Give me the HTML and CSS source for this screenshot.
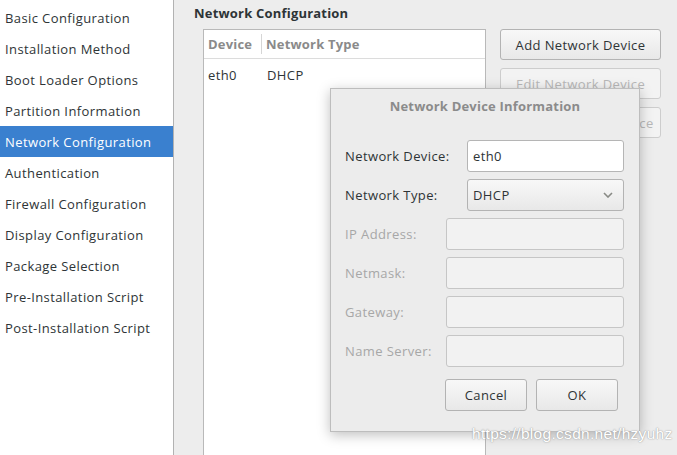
FILE: index.html
```html
<!DOCTYPE html>
<html>
<head>
<meta charset="utf-8">
<link rel="stylesheet" href="styles.css">
</head>
<body>
<div class="app">
  <nav class="sidebar">
    <div class="item">Basic Configuration</div>
    <div class="item">Installation Method</div>
    <div class="item">Boot Loader Options</div>
    <div class="item">Partition Information</div>
    <div class="item selected">Network Configuration</div>
    <div class="item">Authentication</div>
    <div class="item">Firewall Configuration</div>
    <div class="item">Display Configuration</div>
    <div class="item">Package Selection</div>
    <div class="item">Pre-Installation Script</div>
    <div class="item">Post-Installation Script</div>
  </nav>
  <main class="content">
    <h1 class="title">Network Configuration</h1>
    <div class="panel">
      <div class="table">
        <div class="thead">
          <div class="th col-device">Device</div>
          <div class="th col-type">Network Type</div>
        </div>
        <div class="tr">
          <div class="td col-device">eth0</div>
          <div class="td col-type">DHCP</div>
        </div>
      </div>
      <div class="actions">
        <button class="btn">Add Network Device</button>
        <button class="btn disabled">Edit Network Device</button>
        <button class="btn disabled">Delete Network Device</button>
      </div>
    </div>
  </main>
</div>

<div class="dialog">
  <div class="dialog-title">Network Device Information</div>
  <div class="form">
    <div class="row">
      <label class="lbl">Network Device:</label>
      <div class="input narrow">eth0</div>
    </div>
    <div class="row">
      <label class="lbl">Network Type:</label>
      <div class="combo narrow">
        <span>DHCP</span>
        <svg class="chev" width="10" height="6" viewBox="0 0 10 6"><path d="M1 1 L5 5 L9 1" fill="none" stroke="#888a85" stroke-width="1.6"/></svg>
      </div>
    </div>
    <div class="row">
      <label class="lbl off">IP Address:</label>
      <div class="input wide off"></div>
    </div>
    <div class="row">
      <label class="lbl off">Netmask:</label>
      <div class="input wide off"></div>
    </div>
    <div class="row">
      <label class="lbl off">Gateway:</label>
      <div class="input wide off"></div>
    </div>
    <div class="row">
      <label class="lbl off">Name Server:</label>
      <div class="input wide off"></div>
    </div>
  </div>
  <div class="dialog-buttons">
    <button class="btn dbtn">Cancel</button>
    <button class="btn dbtn">OK</button>
  </div>
</div>

<div class="watermark">https://blog.csdn.net/hzyuhz</div>
</body>
</html>
```

FILE: styles.css
```css
* { box-sizing: border-box; }
html, body {
  margin: 0;
  padding: 0;
  width: 677px;
  height: 455px;
  overflow: hidden;
  background: #ededed;
  font-family: "Open Sans", "DejaVu Sans", sans-serif;
  font-size: 13px;
  letter-spacing: 0.4px;
  color: #2e3436;
}
.app {
  display: flex;
  height: 455px;
}
.sidebar {
  width: 174px;
  flex: none;
  background: #ffffff;
  border-right: 1px solid #b2b2b2;
  padding-top: 2px;
}
.item {
  height: 31px;
  line-height: 31px;
  padding: 1px 0 0 5px;
  white-space: nowrap;
}
.item.selected {
  background: #3a80cf;
  color: #ffffff;
}
.content {
  flex: 1;
  padding: 4px 0 0 20px;
  display: flex;
  flex-direction: column;
}
.title {
  margin: 0 0 7px 0;
  font-size: 13px;
  font-weight: bold;
  line-height: 18px;
  letter-spacing: 0.2px;
  color: #2e3436;
}
.panel {
  display: flex;
  flex: 1;
  padding-left: 9px;
}
.table {
  width: 283px;
  flex: none;
  background: #ffffff;
  border: 1px solid #b9b9b9;
  border-bottom: none;
}
.thead {
  display: flex;
  height: 29px;
  border-bottom: 1px solid #dcdcdc;
}
.th {
  font-weight: bold;
  color: #8a8a8a;
  line-height: 28px;
  padding-left: 4px;
  letter-spacing: 0.2px;
}
.thead .col-device {
  border-right: 1px solid #d6d6d6;
  margin: 4px 0;
  line-height: 20px;
}
.col-device { width: 58px; }
.tr {
  display: flex;
  height: 32px;
  line-height: 32px;
}
.td { padding-left: 4px; }
.tr .col-type { padding-left: 5px; }
.actions {
  margin-left: 14px;
  width: 161px;
  display: flex;
  flex-direction: column;
  gap: 8px;
}
.btn {
  font-family: inherit;
  font-size: 13px;
  letter-spacing: 0.4px;
  color: #2e3436;
  height: 31px;
  border: 1px solid #b3b3b3;
  border-radius: 3px;
  background: linear-gradient(#f8f8f8, #e8e8e8);
  padding: 0;
  white-space: nowrap;
}
.btn.disabled {
  color: #b8b8b8;
  background: #f3f3f3;
  border-color: #cdcdcd;
}
.dialog {
  position: absolute;
  left: 330px;
  top: 88px;
  width: 310px;
  height: 344px;
  background: #ececec;
  border: 1px solid #bdbdbd;
  box-shadow: 0 3px 12px rgba(0, 0, 0, 0.25);
  padding: 7px 15px 0 14px;
}
.dialog-title {
  text-align: center;
  font-weight: bold;
  color: #8b8b8b;
  line-height: 20px;
  letter-spacing: 0.2px;
  margin-left: 1px;
}
.form {
  margin-top: 24px;
  display: flex;
  flex-direction: column;
  gap: 7px;
}
.row {
  display: flex;
  justify-content: space-between;
  align-items: center;
  height: 32px;
}
.lbl { white-space: nowrap; }
.lbl.off { color: #a7a7a7; }
.input {
  height: 32px;
  border: 1px solid #b5b5b5;
  border-radius: 3px;
  background: #ffffff;
  line-height: 30px;
  padding-left: 5px;
}
.input.narrow, .combo.narrow { width: 157px; }
.input.wide { width: 178px; }
.input.off {
  background: #f2f2f2;
  border-color: #c6c6c6;
}
.combo {
  height: 32px;
  border: 1px solid #b3b3b3;
  border-radius: 3px;
  background: linear-gradient(#f8f8f8, #e8e8e8);
  display: flex;
  align-items: center;
  justify-content: space-between;
  padding: 0 10px 0 5px;
}
.chev { display: block; }
.dialog-buttons {
  display: flex;
  gap: 9px;
  margin-top: 12px;
  padding-left: 100px;
}
.dbtn {
  width: 82px;
  height: 32px;
}
.watermark {
  position: absolute;
  left: 472px;
  top: 425px;
  font-family: "Liberation Sans", Arial, sans-serif;
  font-size: 15.5px;
  color: #ffffff;
  text-shadow: 0 0 1px #9a9a9a, 0 0 2px #b0b0b0;
  letter-spacing: 0.3px;
  white-space: nowrap;
}
```
